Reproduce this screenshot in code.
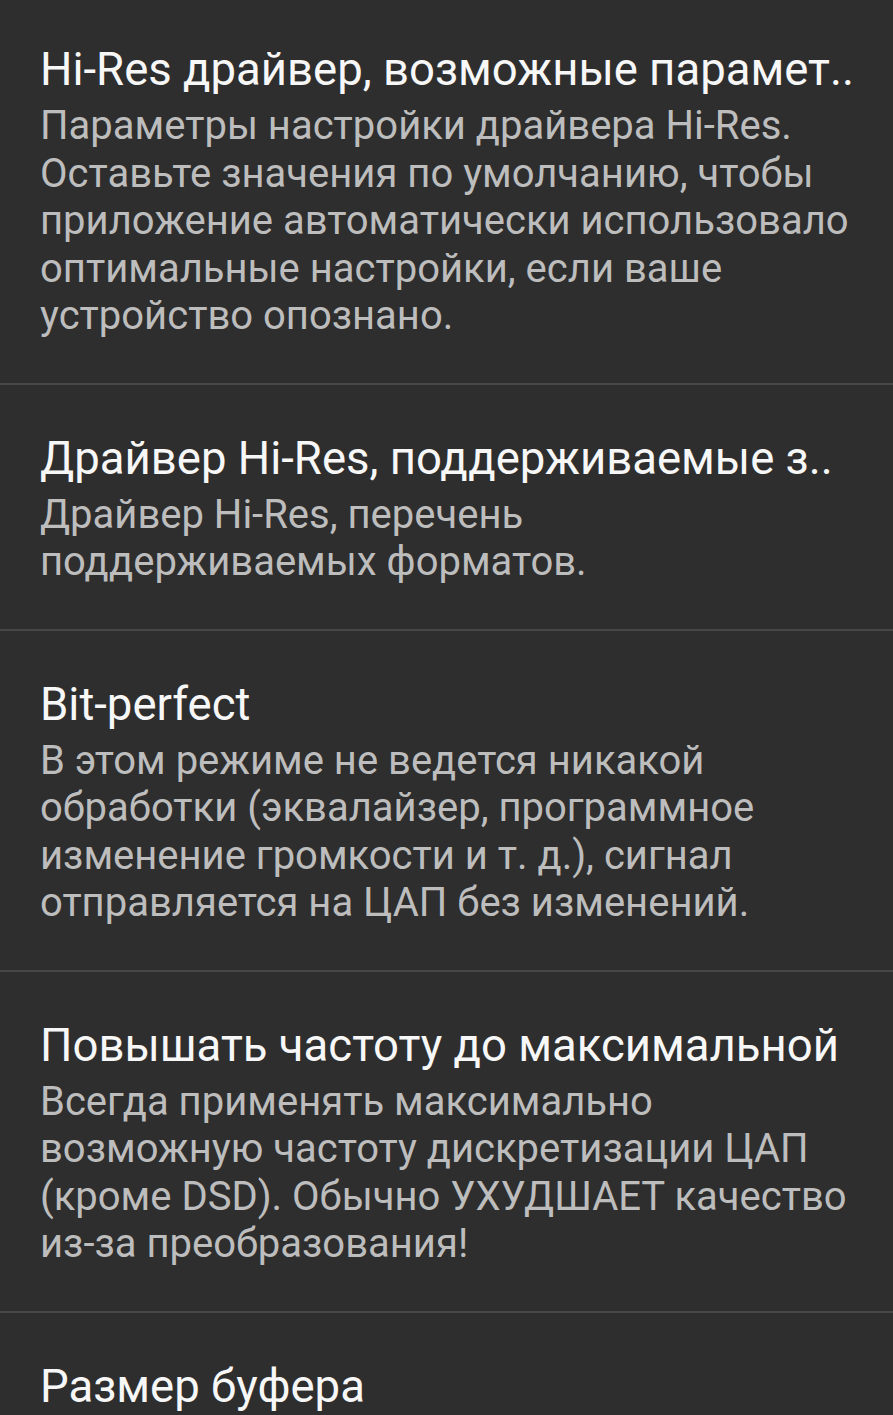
import React from 'react';

const items = [
  {
    title: 'Hi-Res драйвер, возможные парамет..',
    lines: [
      'Параметры настройки драйвера Hi-Res.',
      'Оставьте значения по умолчанию, чтобы',
      'приложение автоматически использовало',
      'оптимальные настройки, если ваше',
      'устройство опознано.',
    ],
  },
  {
    title: 'Драйвер Hi-Res, поддерживаемые з..',
    lines: ['Драйвер Hi-Res, перечень', 'поддерживаемых форматов.'],
  },
  {
    title: 'Bit-perfect',
    lines: [
      'В этом режиме не ведется никакой',
      'обработки (эквалайзер, программное',
      'изменение громкости и т. д.), сигнал',
      'отправляется на ЦАП без изменений.',
    ],
  },
  {
    title: 'Повышать частоту до максимальной',
    lines: [
      'Всегда применять максимально',
      'возможную частоту дискретизации ЦАП',
      '(кроме DSD). Обычно УХУДШАЕТ качество',
      'из-за преобразования!',
    ],
  },
  { title: 'Размер буфера', lines: [] },
];

export default function App() {
  return (
    <div
      className="w-[893px] h-[1415px] overflow-hidden bg-[#2e2e2e]"
      style={{ fontFamily: 'Roboto, "Noto Sans", sans-serif' }}
    >
      <div className="-mt-[4px]">
        {items.map((item, i) => (
          <div key={i} className={i > 0 ? 'border-t-2 border-[#474747]' : ''}>
            <div className="px-[40px] pt-[48px] pb-[43px]">
              <div className="text-[45.5px] leading-[52px] text-[#f7f7f7] whitespace-nowrap">
                {item.title}
              </div>
              {item.lines.length > 0 && (
                <div className="mt-[6px] text-[40px] leading-[47.5px] text-[#bdbdbd]">
                  {item.lines.map((l, j) => (
                    <div key={j} className="whitespace-nowrap">{l}</div>
                  ))}
                </div>
              )}
            </div>
          </div>
        ))}
      </div>
    </div>
  );
}
